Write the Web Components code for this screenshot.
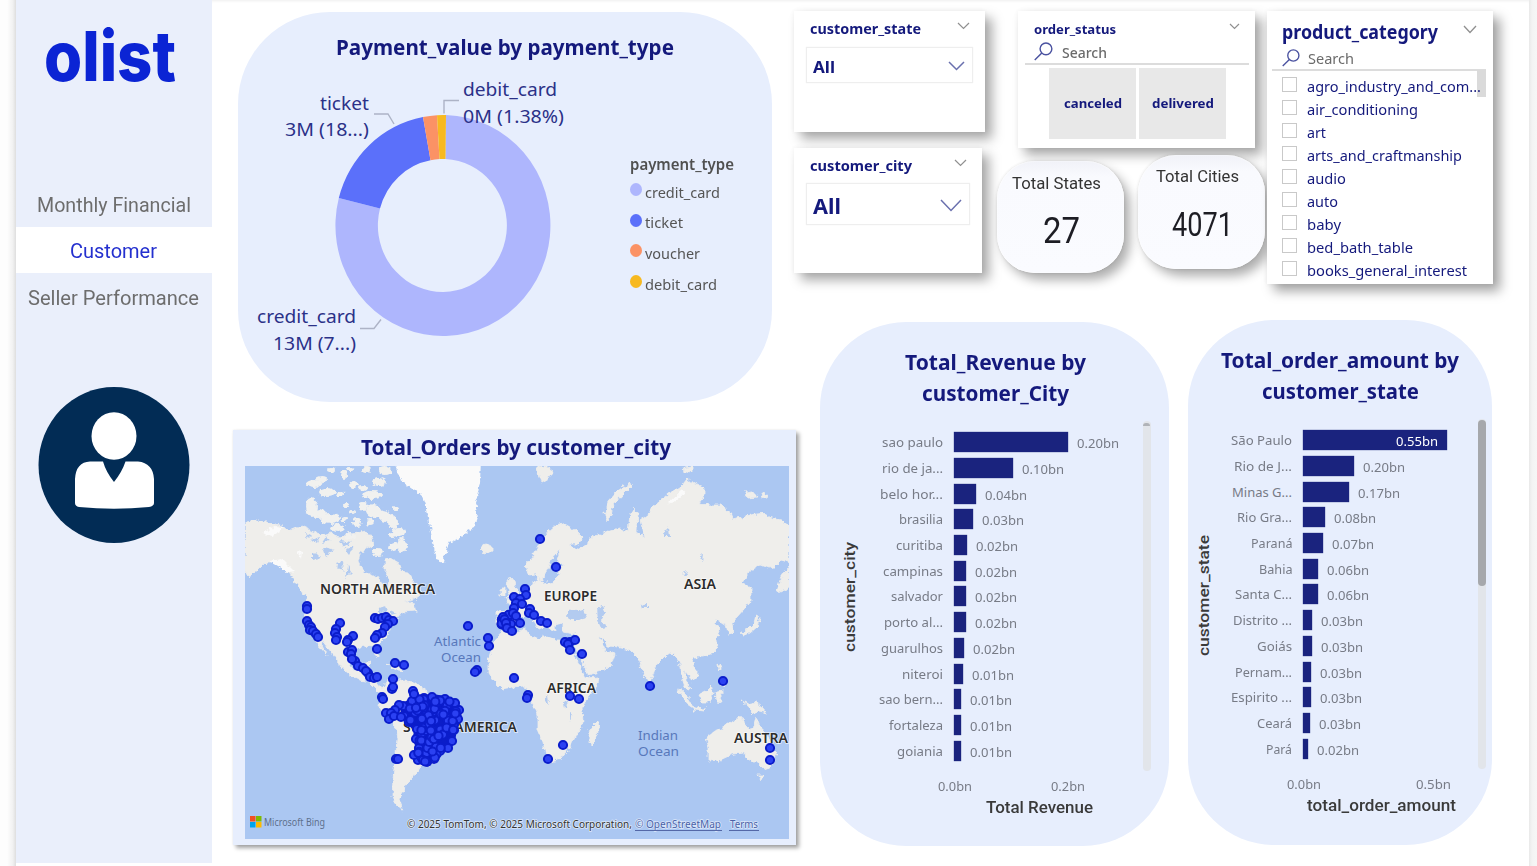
<!DOCTYPE html>
<html lang="en">
<head>
<meta charset="utf-8">
<title>Olist customer dashboard</title>
<style>
  html, body { margin: 0; height: 100%; overflow: hidden; background: #fff; }
  body { font-family: "Open Sans", "Noto Sans", sans-serif; color: #14197c; }
</style>
</head>
<body>
<olist-dashboard></olist-dashboard>

<script>
const UI = '"Noto Sans", "Open Sans", sans-serif';
const DIN = 'Roboto, "Open Sans", sans-serif';

class Base extends HTMLElement {
  connectedCallback() {
    if (this.shadowRoot) return;
    this.attachShadow({ mode: 'open' });
    this.shadowRoot.innerHTML = this.view();
  }
  a(name, fallback = '') { return this.getAttribute(name) ?? fallback; }
}

const label = (text, w, size, opts = {}) =>
  `<fit-label w="${w}" size="${size}" weight="${opts.weight || 400}" lh="${opts.lh || 20}" ` +
  `face="${opts.face || 'ui'}" color="${opts.color || 'inherit'}">${text}</fit-label>`;

const chevron = (w, h, stroke, sw = 1.3) =>
  `<svg class="chev" width="${w}" height="${h}" viewBox="0 0 ${w} ${h}" fill="none" stroke="${stroke}" stroke-width="${sw}"><path d="M1 1 L${w / 2} ${h - 1.5} L${w - 1} 1"/></svg>`;

const lens = (s) =>
  `<svg width="${s}" height="${s}" viewBox="0 0 20 20" fill="none" stroke="#4a52a0" stroke-width="1.5"><circle cx="12.6" cy="7.2" r="6.2"/><path d="M8.2 11.6 L.8 19"/></svg>`;

/* ---------- page ---------- */
class OlistDashboard extends Base {
  view() {
    return `
    <style>
      :host { display: flex; width: 1537px; height: 866px; background: #fff; overflow: hidden; }
      .edge { width: 15.500px; flex: none; background: linear-gradient(90deg, #fdfdfd 0 45%, #f1f1f1 80%, #dedede); }
      .edge.r { width: 8px; background: linear-gradient(90deg, #e9e9e9, #f3f3f3 40%, #f6f6f6); }
      main { flex: 1; display: flex; min-width: 0; box-shadow: inset 0 3px 3px -2px #eee; }
      .left { width: 582px; flex: none; }
      .left donut-card { margin: 12px 0 0 26px; }
      .left map-card { margin: 28px 0 0 21px; }
      .right { flex: 1; min-width: 0; }
      .top { display: flex; height: 320px; }
      .col1 { width: 203px; padding-top: 11px; flex: none; }
      .col1 drop-slicer + drop-slicer { margin-top: 16px; }
      .col2 { width: 270px; padding-top: 11px; flex: none; }
      .col2 status-slicer { margin-left: 21px; }
      .kpis { display: flex; gap: 14px; margin-top: 7px; }
      .kpis kpi-card:first-child { margin-top: 6px; }
      .col3 { padding-top: 11px; }
      .bottom { display: flex; padding-left: 26px; gap: 19px; }
      .bottom bar-card:first-child { margin-top: 2px; }
    </style>
    <div class="edge"></div>
    <side-nav></side-nav>
    <main>
      <div class="left">
        <donut-card></donut-card>
        <map-card></map-card>
      </div>
      <div class="right">
        <div class="top">
          <div class="col1">
            <drop-slicer name="customer_state" w="191" h="121" tw="111" bw="167" bh="36" gap="9" vw="22" vs="16.5" cw="17"></drop-slicer>
            <drop-slicer name="customer_city" w="188" h="125" tw="102" bw="164" bh="42" gap="8" vw="28" vs="21.5" cw="22"></drop-slicer>
          </div>
          <div class="col2">
            <status-slicer></status-slicer>
            <div class="kpis">
              <kpi-card name="Total States" value="27" tw="89" vw="37" h="112" vs="36" pad="13"></kpi-card>
              <kpi-card name="Total Cities" value="4071" tw="83" vw="61" h="114" vs="34" pad="12"></kpi-card>
            </div>
          </div>
          <div class="col3"><list-slicer></list-slicer></div>
        </div>
        <div class="bottom">
          <bar-card chart="city"></bar-card>
          <bar-card chart="state"></bar-card>
        </div>
      </div>
    </main>
    <div class="edge r"></div>`;
  }
}

/* ---------- sidebar ---------- */
class SideNav extends Base {
  view() {
    return `
    <style>
      :host { display: flex; flex-direction: column; align-items: center; width: 196.500px; height: 863px; flex: none;
        background: #eaeffb; }
      .logo { margin-top: 9px; height: 94px; margin-bottom: 77px; padding-right: 7px; }
      nav { width: 100%; }
      nav div { height: 46.5px; display: flex; align-items: center; justify-content: center; }
      nav fit-label { margin-top: 3px; }
      nav .on { background: #fff; }
      svg { display: block; margin-top: 66px; }
    </style>
    <div class="logo">${label('olist', 132, 69, { weight: 800, face: 'logo', lh: 94, color: '#0b24d4' })}</div>
    <nav>
      <div>${label('Monthly Financial', 154, 20, { face: 'din', lh: 26, color: '#6d6d6d' })}</div>
      <div class="on">${label('Customer', 87, 20, { face: 'din', lh: 26, color: '#2430cf' })}</div>
      <div>${label('Seller Performance', 171, 20, { face: 'din', lh: 26, color: '#6d6d6d' })}</div>
    </nav>
    <svg width="152" height="158" viewBox="0 0 152 158">
      <ellipse cx="76" cy="79" rx="75.5" ry="78" fill="#022c55"/>
      <ellipse cx="76" cy="50" rx="22.5" ry="23.7" fill="#fff"/>
      <path fill="#fff" d="M37 117V93Q38 76 52 75.500H65Q68 86 76 96Q84 86 87.500 75.500H100Q115 77 116 93V117Q116 120 111 121Q76 124.500 41 121Q37 120 37 117Z"/>
    </svg>`;
  }
}

/* ---------- slicers ---------- */
class DropSlicer extends Base {
  view() {
    const n = k => +this.a(k);
    return `
    <style>
      :host { display: block; box-sizing: border-box; width: ${n('w')}px; height: ${n('h')}px; background: #fff;
        padding: 6px 12px 0; box-shadow: 7px 7px 11px rgba(0,0,0,.34), 0 0 5px rgba(0,0,0,.05); position: relative; }
      .head { display: flex; justify-content: space-between; align-items: center; height: 20px; padding: 0 3px 0 4px; }
      .head svg { margin-top: -3px; }
      .head fit-label { margin-top: 1px; }
      .box { display: flex; justify-content: space-between; align-items: center; box-sizing: border-box;
        width: ${n('bw')}px; height: ${n('bh')}px; margin-top: ${n('gap') + 1}px; border: 1px solid #eee; padding: 0 7px 0 6px;
        box-shadow: 0 0 1px #eee; }
      .box fit-label { margin-top: 4px; }
      .box svg { margin-top: 2px; }
    </style>
    <div class="head">${label(this.a('name'), n('tw'), 15, { weight: 700 })}${chevron(13, 8, '#909090', 1.2)}</div>
    <div class="box">${label('All', n('vw'), n('vs'), { weight: 700, lh: 24 })}${chevron(n('cw'), n('cw') > 20 ? 13 : 10, '#6a70ae', 1.5)}</div>`;
  }
}

class StatusSlicer extends Base {
  view() {
    return `
    <style>
      :host { display: block; box-sizing: border-box; width: 237px; height: 137px; background: #fff; position: relative;
        padding: 8px 6px 0 7px; box-shadow: 7px 7px 11px rgba(0,0,0,.34), 0 0 5px rgba(0,0,0,.05); }
      .head { display: flex; justify-content: space-between; align-items: center; height: 20px; padding: 0 9px; }
      .head svg { margin-top: -5px; }
      .head fit-label { margin-top: -1px; }
      .search { display: flex; align-items: center; height: 24px; padding-left: 9px; gap: 9px; border-bottom: 2px solid #dcdcdc; }
      .search fit-label { margin-top: 3px; }
      .tiles { display: flex; gap: 3px; margin: 3px 0 0 24px; }
      .tiles div { width: 87px; height: 71px; background: #e8e8e8; display: flex; align-items: center; justify-content: center; }
      .tiles fit-label { margin-top: -2px; }
    </style>
    <div class="head">${label('order_status', 82, 13, { weight: 700 })}${chevron(11, 7, '#909090', 1.2)}</div>
    <div class="search">${lens(19)}${label('Search', 45, 13.5, { weight: 500, color: '#6b6b6b' })}</div>
    <div class="tiles"><div>${label('canceled', 58, 13, { weight: 700 })}</div><div>${label('delivered', 62, 13, { weight: 700 })}</div></div>`;
  }
}

class ListSlicer extends Base {
  view() {
    const rows = [['agro_industry_and_com...', 174], ['air_conditioning', 111], ['art', 19], ['arts_and_craftmanship', 155],
      ['audio', 39], ['auto', 31], ['baby', 34], ['bed_bath_table', 106], ['books_general_interest', 160]];
    return `
    <style>
      :host { display: block; box-sizing: border-box; width: 226px; height: 273px; background: #fff; position: relative;
        padding: 8px 7px 0 5px; box-shadow: 7px 7px 11px rgba(0,0,0,.36), 0 0 5px rgba(0,0,0,.06); }
      .head { display: flex; justify-content: space-between; align-items: center; height: 26px; padding: 0 9px 0 10px; }
      .head svg { margin-top: -5px; }
      .search { display: flex; align-items: center; height: 23px; padding: 1px 0 0 10px; gap: 8px; border-bottom: 2px solid #dcdcdc; }
      .search fit-label { margin-top: 1px; }
      ul { list-style: none; margin: 0; padding: 2px 0 0 10px; position: relative; z-index: 1; }
      li { display: flex; align-items: center; gap: 10px; height: 23.05px; }
      li i { box-sizing: border-box; width: 15px; height: 15px; border: 1px solid #c9c9c9; }
      li fit-label { margin-top: 2px; }
      .thumb { position: absolute; z-index: 0; right: 7px; top: 59px; width: 9px; height: 27px; background: #dadada; }
    </style>
    <div class="head">${label('product_category', 156, 20, { weight: 700, lh: 26 })}${chevron(14, 9, '#909090', 1.3)}</div>
    <div class="search">${lens(18)}${label('Search', 46, 14.8, { color: '#6b6b6b' })}</div>
    <div class="thumb"></div>
    <ul>${rows.map(([t, w]) => `<li><i></i>${label(t, w, 15.2, { lh: 22 })}</li>`).join('')}</ul>`;
  }
}

/* ---------- KPI ---------- */
class KpiCard extends Base {
  view() {
    return `
    <style>
      :host { display: flex; flex-direction: column; align-items: center; box-sizing: border-box; width: 127px;
        height: ${this.a('h')}px; border-radius: 38px; padding: ${this.a('pad')}px 8px 0 0; position: relative;
        background: linear-gradient(#f1f2f8, #f9fafe 14%, #fafbff);
        box-shadow: 6px 7px 11px rgba(0,0,0,.32), 0 0 3px rgba(0,0,0,.12), inset 0 0 2px #fff; }
      .v { margin: 15.500px 0 0 9px; }
    </style>
    ${label(this.a('name'), this.a('tw'), 16.6, { face: 'din', color: '#333' })}
    <div class="v">${label(this.a('value'), this.a('vw'), this.a('vs'), { face: 'din', color: '#1d1d24', lh: 42 })}</div>`;
  }
}

/* ---------- donut ---------- */
class DonutCard extends Base {
  view() {
    const leg = [['credit_card', '#aeb6fd', 75], ['ticket', '#5b70fa', 38], ['voucher', '#fb9265', 55], ['debit_card', '#f7b920', 72]];
    return `
    <style>
      :host { display: block; box-sizing: border-box; width: 534px; height: 390px; border-radius: 92px; background: #e7eefd; padding-top: 20px; }
      .title { display: flex; justify-content: center; height: 30px; }
      .body { display: flex; gap: 12px; }
      svg { flex: none; display: block; }
      .legend { padding-top: 91px; }
      .row { display: flex; align-items: center; height: 30.6px; gap: 3px; }
      .row i { width: 12px; height: 13px; border-radius: 50%; margin-top: -1px; }
      .row fit-label { margin-top: 3px; }
      text { font: 18.600px ${UI}; fill: #2b3188; }
    </style>
    <div class="title">${label('Payment_value by payment_type', 338, 22.2, { weight: 700, lh: 30 })}</div>
    <div class="body">
      <svg width="380" height="340" viewBox="238 62 380 340">
        <path fill="#aeb6fd" d="M446 115A107.500 110.500 0 1 1 338.800 198L380 208.500A64.500 66.500 0 1 0 445.500 159Z"/>
        <path fill="#5b70fa" d="M338.800 198A107.500 110.500 0 0 1 423 117L430.500 160.300A64.500 66.500 0 0 0 380 208.500Z"/>
        <path fill="#fb9265" d="M423 117A107.500 110.500 0 0 1 437 115.200L439.500 159A64.500 66.500 0 0 0 430.500 160.300Z"/>
        <path fill="#f7b920" d="M437 115.200Q441 114.800 446 115L445.500 159H439.500Z"/>
        <g fill="none" stroke="#adb3c6" stroke-width="1.400">
          <path d="M374 114h14l6 10"/><path d="M459 100.500h-15v13"/><path d="M360 328.500h14l7-9"/>
        </g>
        <text x="320" y="109.500" textLength="49" lengthAdjust="spacingAndGlyphs">ticket</text>
        <text x="285" y="136" textLength="84" lengthAdjust="spacingAndGlyphs">3M (18...)</text>
        <text x="463" y="95.500" textLength="94" lengthAdjust="spacingAndGlyphs">debit_card</text>
        <text x="463" y="122.500" textLength="101" lengthAdjust="spacingAndGlyphs">0M (1.38%)</text>
        <text x="257" y="323" textLength="99" lengthAdjust="spacingAndGlyphs">credit_card</text>
        <text x="273" y="350" textLength="83" lengthAdjust="spacingAndGlyphs">13M (7...)</text>
      </svg>
      <div class="legend">
        ${label('payment_type', 104, 15.8, { weight: 600, color: '#505050', lh: 22 })}
        ${leg.map(([t, c, w]) => `<div class="row"><i style="background:${c}"></i>${label(t, w, 15.2, { color: '#555' })}</div>`).join('')}
      </div>
    </div>`;
  }
}

/* ---------- bar charts ---------- */
const CHARTS = {
  city: {
    w: 349, h: 524, title: [['Total_Revenue by', 181], ['customer_City', 147]],
    axis: ['customer_city', 110], x: 'Total Revenue', xw: 107, xoff: 166, labelEnd: 123, axisX: 19, axisY: 219,
    ticks: [['0.0bn', 118, 34], ['0.2bn', 231, 34]],
    rows: [['sao paulo', 61, 114, '0.20bn'], ['rio de ja...', 61, 59, '0.10bn'], ['belo hor...', 63, 22, '0.04bn'], ['brasilia', 44, 19, '0.03bn'],
      ['curitiba', 47, 13, '0.02bn'], ['campinas', 60, 12, '0.02bn'], ['salvador', 52, 12, '0.02bn'], ['porto al...', 59, 12, '0.02bn'],
      ['guarulhos', 62, 9.500, '0.02bn'], ['niteroi', 41, 8.500, '0.01bn'], ['sao bern...', 64, 7, '0.01bn'], ['fortaleza', 54, 6.500, '0.01bn'], ['goiania', 46, 6.500, '0.01bn']],
    scroll: { x: 323, thumb: false }
  },
  state: {
    w: 304, h: 525, title: [['Total_order_amount by', 238], ['customer_state', 157]],
    axis: ['customer_state', 121], x: 'total_order_amount', xw: 149, xoff: 119, labelEnd: 104, axisX: 5, axisY: 214,
    ticks: [['0.0bn', 99, 34], ['0.5bn', 228, 35]],
    rows: [['São Paulo', 61, 144, '0.55bn'], ['Rio de J...', 58, 51, '0.20bn'], ['Minas G...', 60, 45.500, '0.17bn'], ['Rio Gra...', 55, 22, '0.08bn'],
      ['Paraná', 41.5, 19.500, '0.07bn'], ['Bahia', 33.5, 15, '0.06bn'], ['Santa C...', 57, 15, '0.06bn'], ['Distrito ...', 59, 9, '0.03bn'],
      ['Goiás', 35, 8.500, '0.03bn'], ['Pernam...', 57, 8, '0.03bn'], ['Espirito ...', 61, 8, '0.03bn'], ['Ceará', 35, 7, '0.03bn'], ['Pará', 26, 5, '0.02bn']],
    scroll: { x: 290, thumb: true }
  }
};

class BarCard extends Base {
  view() {
    const c = CHARTS[this.a('chart')];
    const row = ([t, tw, bw, v]) => {
      const inside = bw > 120;
      const val = label(v, 42, 12.8, { lh: 16, color: inside ? '#fff' : '#777b86' });
      return `<div class="row"><div class="name">${label(t, tw, 13, { lh: 16, color: '#777b86' })}</div>
        <div class="bar" style="width:${bw}px">${inside ? val : ''}</div>${inside ? '' : `<div class="val">${val}</div>`}</div>`;
    };
    return `
    <style>
      :host { display: block; box-sizing: border-box; width: ${c.w}px; height: ${c.h}px; border-radius: 86px; background: #e7eefd;
        padding-top: 24px; flex: none; }
      .title { display: flex; flex-direction: column; align-items: center; padding-left: ${c.w > 320 ? 1 : 0}px; }
      .plot { display: flex; height: 335px; margin-top: 21.500px; }
      .ylab { width: 26px; margin: ${c.axisY - 112}px 0 0 ${c.axisX}px; flex: none; }
      .ylab svg { display: block; }
      .rows { width: ${c.scroll.x - c.axisX - 26}px; flex: none; }
      .row { display: flex; align-items: center; height: 25.700px; }
      .name { width: ${c.labelEnd - c.axisX - 26}px; display: flex; justify-content: flex-end; margin-right: 11px; }
      .bar { height: 20px; background: #1a237e; box-shadow: 0 0 1px #1a237e; display: flex; align-items: center; justify-content: flex-end; box-sizing: border-box; }
      .bar fit-label { margin: 2px 9px 0 0; }
      .val { margin: 2px 0 0 9px; }
      .track { width: 8px; height: 350px; margin-top: -9px; border-radius: 4px; background: #e2e5ea; }
      .track i { display: block; width: 8px; height: 166px; border-radius: 4px; background: #a6a8ac; margin-top: 1px; }
      .track b { display: block; width: 7px; height: 3px; border-radius: 3px 3px 0 0; background: #b0b3b8; margin-top: 2px; }
      .ticks { display: flex; margin-top: 11px; height: 20px; padding-left: ${c.ticks[0][1]}px; gap: ${c.ticks[1][1] - c.ticks[0][1] - 34}px; }
      .xlab { padding-left: ${c.xoff}px; margin-top: 1px; }
      text { font: 500 15.500px ${DIN}; fill: #3a3a3a; }
    </style>
    <div class="title">${c.title.map(([t, w]) => label(t, w, 22, { weight: 700, lh: 31 })).join('')}</div>
    <div class="plot">
      <div class="ylab">
        <svg width="26" height="${c.axis[1] + 10}"><text transform="translate(15.500 ${c.axis[1] + 5}) rotate(-90)" textLength="${c.axis[1]}" lengthAdjust="spacingAndGlyphs">${c.axis[0]}</text></svg>
      </div>
      <div class="rows">${c.rows.map(row).join('')}</div>
      <div class="track">${c.scroll.thumb ? '<i></i>' : '<b></b>'}</div>
    </div>
    <div class="ticks">${c.ticks.map(([t, , w]) => label(t, w, 12.8, { color: '#777b86' })).join('')}</div>
    <div class="xlab">${label(c.x, c.xw, 16, { face: 'din', weight: 500, color: '#3a3a3a', lh: 22 })}</div>`;
  }
}

/* ---------- map ---------- */
class MapCard extends Base {
  view() {
    const land = [
      // North and Central America
      '245,522 252,521 262,521 270,523 280,525 289,531 296,528 303,527 312,531 322,535 331,533 338,537 348,535 357,533 366,531 371,537 373,545 366,549 360,553 358,562 362,570 372,575 380,580 384,589 388,588 389,579 385,571 385,560 391,558 398,562 401,571 408,572 412,580 418,588 423,592 412,600 404,602 414,604 416,611 402,612 396,619 391,626 388,634 383,640 378,645 378,656 375,655 373,647 365,646 357,648 351,651 349,660 352,670 359,671 362,664 370,662 368,672 374,676 377,684 382,690 386,694 394,693 393,698 385,696 378,691 369,682 360,680 349,674 341,667 335,657 328,648 320,638 321,645 327,656 320,648 315,638 309,630 305,620 304,608 307,598 301,590 295,582 290,573 283,568 274,562 266,562 258,570 248,577 245,570',
      // South America
      '384,686 388,680 396,679 404,681 414,682 423,688 431,694 440,697 448,703 458,706 462,713 458,722 455,736 449,748 440,752 436,762 427,767 423,764 417,772 412,778 406,784 404,792 399,799 403,810 397,805 392,797 393,780 394,768 396,752 398,739 396,727 388,719 382,711 378,705 380,697',
      // Eurasia
      '497,612 508,611 512,607 506,600 513,598 521,594 527,589 533,586 537,577 543,584 553,582 560,575 557,569 565,566 557,560 561,548 551,560 547,572 541,581 536,574 528,575 526,566 533,556 540,543 548,532 556,525 563,523 575,530 583,538 578,544 569,544 577,550 588,544 589,537 600,535 609,531 620,528 628,532 630,515 634,509 638,514 637,532 644,537 640,520 648,514 653,507 659,502 668,494 680,487 687,478 694,484 704,487 704,497 699,504 711,505 721,505 729,511 732,519 742,517 755,514 764,513 771,518 781,520 789,526 789,563 782,560 775,567 768,568 760,565 750,571 743,583 751,588 751,600 745,608 737,617 732,624 733,633 728,634 726,625 717,619 714,623 720,630 717,640 718,648 713,653 703,657 694,657 692,663 698,671 698,676 692,681 689,675 685,670 686,680 690,689 685,687 682,678 681,667 677,658 671,652 665,657 657,665 652,678 648,683 643,672 638,658 630,650 617,647 608,646 603,639 599,636 606,651 615,654 611,665 602,671 588,675 584,665 577,652 574,641 575,634 562,632 562,623 555,625 556,632 551,630 547,622 540,614 546,626 539,629 531,616 524,615 517,622 513,629 502,629 497,623',
      // Africa
      '502,631 514,632 526,629 530,635 539,639 547,636 557,640 569,640 575,656 581,668 585,678 599,677 597,686 586,700 582,708 583,724 576,735 571,746 562,758 551,761 546,756 543,742 538,730 538,715 533,704 530,692 523,686 512,687 502,689 494,681 489,673 489,657 493,644',
      '588,736 591,728 598,721 599,728 595,740 591,744', '677,688 684,692 691,703 693,708 687,704 681,695', '693,708 706,709 704,711 694,710',
      '699,695 705,692 711,686 713,693 710,702 703,702', '716,692 723,691 719,697 722,703 717,702', '718,664 722,667 719,671', '721,678 726,681 725,687 720,684',
      '741,701 747,704 756,702 762,707 768,714 759,712 754,713 749,708',
      // Australia
      '706,738 715,731 723,728 727,722 734,723 739,717 745,720 746,727 753,730 756,717 760,727 767,736 773,745 776,756 772,766 764,769 757,762 751,762 744,753 733,754 720,760 709,761 709,748',
      '758,775 764,775 761,781', '507,597 510,590 506,585 511,577 515,582 518,593 514,598', '500,590 505,588 505,595 500,596',
      '740,634 748,629 754,623 756,615 760,617 757,627 750,633 743,636', '777,590 781,578 789,566 789,588 781,592',
      '607,521 605,511 608,501 616,492 628,484 632,485 622,495 613,505 611,515', '536,468 546,466 553,471 549,478 542,482', '684,467 692,466 692,473 685,472', '744,492 753,491 758,497 748,498', '762,493 768,496 763,498',
      '480,548 485,544 492,546 492,551 484,554', '386,664 399,667 403,671 394,669'
    ];
    const ice = ['393,460 481,460 480,482 478,493 475,503 477,514 475,527 467,531 460,538 450,542 446,551 443,562 437,560 434,548 431,533 428,517 427,508 423,497 415,490 408,485 400,479'];
    // Arctic archipelago: cx, cy, rx, ry
    const isles = [[314,484,8,4],[327,492,9,4],[322,479,6,3],[331,470,4,2],[344,475,3,5],[350,469,4,2],[354,485,5,3],[372,495,10,4],[379,482,7,4],[385,471,7,4],[366,470,4,3],
      [311,507,6,9],[319,514,7,4],[330,519,10,5],[338,528,7,4],[357,522,4,5],[346,505,3,2],[352,512,3,2],[374,511,8,7],[385,516,6,6],[393,522,5,7],[399,532,6,5],[402,545,5,7],[394,547,5,4],[378,552,6,4],[370,522,4,3],[392,535,4,3],[344,519,3,2],[363,507,4,4],[350,536,5,3],[340,494,4,2],[363,488,4,2],[396,508,3,2]];
    const water = [
      // inland waters: Black Sea, Caspian, lakes, Baltic
      '566,617 570,609 577,611 584,609 587,618 579,620 571,620', '596,608 602,606 605,613 602,618 606,627 601,628 597,619', '377,608 386,606 388,611 381,612', '391,610 397,613 391,615',
      '640,606 648,604 648,609 641,609', '662,532 669,528 670,537 664,537', '700,556 703,553 702,562', '682,573 688,571 686,575', '545,700 548,696 549,704', '563,702 567,701 568,707 564,708', '570,712 572,713 570,721',
      '310,540 320,537 317,544', '323,547 335,550 326,556', '340,541 351,543 343,548', '336,563 342,561 343,572', '327,535 330,541 322,543', '354,546 349,555 345,550', '305,532 311,535 307,539', '313,551 320,558 313,560', '348,565 352,572 346,578'];
    const d = '307,606 307,609 307,621 309,625 311,627 310,630 313,631 316,634 318,637 340,623 336,629 335,633 337,637 336,640 353,636 348,640 347,642 348,652 352,650 351,654 355,661 352,659 358,666 363,668 368,673 366,671 370,677 374,678 377,677 375,618 378,619 382,618 386,617 389,620 393,621 388,624 385,627 382,633 377,635 375,638 377,649 395,663 404,665 393,679 392,689 393,687 382,697 383,699 413,691 414,694 399,705 395,710 386,713 391,713 389,719 394,716 401,717 396,759 398,759 468,626 488,638 489,646 477,670 475,672 540,539 556,567 514,597 525,589 526,595 520,599 516,603 522,604 530,609 529,613 534,615 541,621 547,623 514,608 513,613 516,616 511,624 520,623 506,623 507,628 512,631 514,678 528,695 527,698 565,642 570,642 568,644 575,640 570,650 582,654 570,696 579,699 563,745 548,759 650,686 723,681 770,748 770,760';
    // Deterministic scatter of orders inside Brazil's outline
    const brazil = [[403,706],[412,701],[424,698],[432,697],[445,699],[455,703],[459,710],[458,719],[454,730],[452,741],[448,748],[440,751],[434,759],[427,762],[418,760],[414,755],[419,748],[416,739],[417,729],[409,722],[404,716]];
    const inside = (x, y) => brazil.reduce((r, [xi, yi], i) => {
      const [xj, yj] = brazil[(i + brazil.length - 1) % brazil.length];
      return ((yi > y) !== (yj > y) && x < (xj - xi) * (y - yi) / (yj - yi) + xi) ? !r : r;
    }, false);
    let seed = 11; const rnd = () => (seed = (seed * 16807) % 2147483647) / 2147483647;
    const spots = brazil.map(p => p.slice());
    while (spots.length < 100) { const x = 400 + rnd() * 62, y = 693 + rnd() * 74; if (inside(x, y)) spots.push([x, y]); }
    const dot = ([x, y]) => `<circle cx="${(+x).toFixed(1)}" cy="${(+y).toFixed(1)}" r="4.100"/>`;
    const spain = []; for (let i = 0; i < 16; i++) spain.push([501 + rnd() * 9, 614 + rnd() * 12]);
    const poly = p => `<polygon points="${p}"/>`;
    const t = (s, x, y, w, cls = 'cont') => `<text class="${cls}" x="${x}" y="${y}" textLength="${w}" lengthAdjust="spacingAndGlyphs">${s}</text>`;
    return `
    <style>
      :host { display: block; box-sizing: border-box; width: 563px; height: 415px; background: #e7eefd; padding: 0 7px 0 12px;
        box-shadow: 3px 3px 4px rgba(0,0,0,.36), 0 0 2px rgba(0,0,0,.08); }
      .title { display: flex; justify-content: center; height: 35px; padding: 1px 2px 0 0; }
      svg { display: block; overflow: hidden; }
      .cont { font: 600 13.800px ${UI}; fill: #2c2c2c; stroke: #fff; stroke-width: 1.500px; stroke-opacity: .7; paint-order: stroke; }
      .sea { font: 13px ${UI}; fill: #5878bb; }
      .sm { font: 10px ${UI}; fill: #333; stroke: #fff; stroke-width: 1.500px; stroke-opacity: .6; paint-order: stroke; }
      .lk { fill: #4a62a8; }
      .bing { font: 10.500px ${UI}; fill: #5d6f8c; }
    </style>
    <div class="title">${label('Total_Orders by customer_city', 310, 22, { weight: 700, lh: 31 })}</div>
    <svg width="544" height="373" viewBox="245 466 544 373">
      <defs><filter id="coast" x="0" y="0" width="100%" height="100%"><feTurbulence type="fractalNoise" baseFrequency=".2" numOctaves="3" seed="4"/><feDisplacementMap in="SourceGraphic" scale="6" xChannelSelector="R" yChannelSelector="G"/></filter></defs>
      <rect x="245" y="466" width="544" height="374" fill="#abc7f2"/>
      <g filter="url(#coast)">
        <rect x="235" y="456" width="564" height="394" fill="#abc7f2"/>
        <g fill="#efeeeb" stroke="#efeeeb" stroke-width=".8" stroke-linejoin="round">${land.map(poly).join('')}</g>
        <g fill="#f1f1ef">${isles.map(([x, y, a, b]) => `<ellipse cx="${x}" cy="${y}" rx="${a}" ry="${b}"/>`).join('')}</g>
        <g fill="#fafafa">${ice.map(poly).join('')}<path d="M262 533l15-7 8 2-14 8zM268 561l14-2 12 12-6 1zM668 503l14-13 3 4-13 10zM297 550l5 1-1 8z"/></g>
        <g fill="#b3cbf0">${water.map(poly).join('')}</g>
      </g>
      ${t('NORTH AMERICA', 320, 594, 115)}${t('EUROPE', 544, 601, 53)}${t('ASIA', 684, 589, 32)}${t('AFRICA', 547, 693, 49)}
      ${t('SOUTH AMERICA', 403, 732, 114)}${t('AUSTRA', 734, 743, 54)}
      ${t('Atlantic', 434, 646, 47, 'sea')}${t('Ocean', 441, 662, 40, 'sea')}${t('Indian', 638, 740, 40, 'sea')}${t('Ocean', 638, 756, 41, 'sea')}
      <polygon points="${brazil.join(' ')}" fill="#0b1dc9" stroke="#0b1dc9" stroke-width="6" stroke-linejoin="round"/>
      <g fill="#2b41f2" stroke="#0b1dcb" stroke-width="2">${spots.map(dot).join('')}${spain.map(dot).join('')}${d.split(' ').map(p => dot(p.split(','))).join('')}</g>
      <path fill="#f25022" d="M250 816h5.500v5.500h-5.500z"/><path fill="#7fba00" d="M256 816h5.500v5.500h-5.500z"/><path fill="#00a4ef" d="M250 822h5.500v5.500h-5.500z"/><path fill="#ffb900" d="M256 822h5.500v5.500h-5.500z"/>
      ${t('Microsoft Bing', 264, 826, 61, 'bing')}
      ${t('© 2025 TomTom, © 2025 Microsoft Corporation,', 407, 828, 225, 'sm')}
      ${t('© OpenStreetMap', 635, 828, 86, 'sm lk')}${t('Terms', 730, 828, 28, 'sm lk')}
      <path d="M635 830.500h87M729 830.500h30" stroke="#5468a8" stroke-width="1"/>
    </svg>`;
  }
}

/* A single line of text, condensed or widened to an exact advance width. */
class FitLabel extends HTMLElement {
  connectedCallback() {
    if (this.shadowRoot) return;
    const g = k => this.getAttribute(k);
    const face = { ui: UI, din: DIN, logo: 'Inter, "Open Sans", sans-serif' }[g('face')];
    this.attachShadow({ mode: 'open' }).innerHTML = `
      <style>
        :host { display: block; flex: none; width: ${g('w')}px; height: ${g('lh')}px; white-space: nowrap; }
        span { display: inline-block; transform-origin: 0 50%; font-family: ${face}; font-size: ${g('size')}px;
          font-weight: ${g('weight')}; line-height: ${g('lh')}px; color: ${g('color')}; vertical-align: top; }
      </style><span><slot></slot></span>`;
    const s = this.shadowRoot.querySelector('span');
    const w = s.getBoundingClientRect().width;
    if (w) s.style.transform = `scaleX(${(+g('w') / w).toFixed(4)})`;
  }
}

customElements.define('olist-dashboard', OlistDashboard);
customElements.define('side-nav', SideNav);
customElements.define('drop-slicer', DropSlicer);
customElements.define('status-slicer', StatusSlicer);
customElements.define('list-slicer', ListSlicer);
customElements.define('kpi-card', KpiCard);
customElements.define('donut-card', DonutCard);
customElements.define('bar-card', BarCard);
customElements.define('map-card', MapCard);
customElements.define('fit-label', FitLabel);
</script>
</body>
</html>
